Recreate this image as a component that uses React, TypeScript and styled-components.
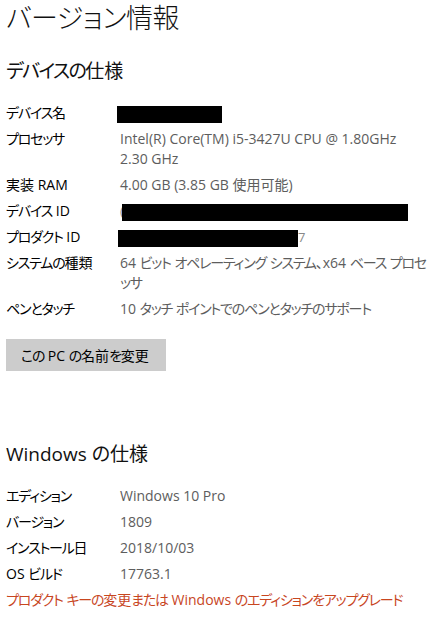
import React from 'react';
import styled, { createGlobalStyle } from 'styled-components';

const GlobalStyle = createGlobalStyle`
  html, body {
    margin: 0;
    padding: 0;
    background: #fff;
  }
  body {
    font-family: 'Open Sans', 'Noto Sans CJK JP', sans-serif;
    font-feature-settings: 'palt';
    color: #000;
  }
`;

const Page = styled.div({
  width: '439px',
  minHeight: '617px',
  padding: '0 0 0 6px',
  boxSizing: 'border-box',
  display: 'flex',
  flexDirection: 'column',
  alignItems: 'flex-start',
});

const Title = styled.h1({
  margin: 0,
  fontSize: '27px',
  lineHeight: '36px',
  fontWeight: 300,
  letterSpacing: '-0.4px',
  color: '#111',
});

const SectionTitle = styled.h2<{ $top?: number }>((p) => ({
  margin: `${p.$top ?? 21}px 0 0 0`,
  fontSize: '19px',
  lineHeight: '28px',
  fontWeight: 400,
  color: '#111',
}));

const SpecList = styled.div({
  marginTop: '18px',
  display: 'grid',
  gridTemplateColumns: '114px 314px',
  rowGap: '6px',
  fontSize: '14px',
  lineHeight: '20px',
});

const Label = styled.div({
  color: '#000',
  whiteSpace: 'nowrap',
});

const Value = styled.div({
  color: '#5d5d5d',
});

// kana runs are a bit tighter in the original UI font
const Kana = styled.span({
  letterSpacing: '-0.085em',
});

const Redacted = styled.span<{ $width: number; $shift?: number }>((p) => ({
  display: 'inline-block',
  verticalAlign: 'middle',
  width: `${p.$width}px`,
  height: '17px',
  marginLeft: `${p.$shift ?? -3}px`,
  background: '#000',
}));

const Peek = styled.span({
  color: '#888',
  fontSize: '13px',
});

const Button = styled.button({
  marginTop: '20px',
  height: '32px',
  width: '160px',
  padding: '0 0 0 15px',
  border: 'none',
  background: '#cccccc',
  color: '#000',
  fontFamily: "'Open Sans', 'Noto Sans CJK JP', sans-serif",
  fontFeatureSettings: "'palt'",
  fontSize: '14px',
  textAlign: 'left',
  whiteSpace: 'nowrap',
  cursor: 'pointer',
});

const Link = styled.a({
  marginTop: '6px',
  fontSize: '14px',
  lineHeight: '20px',
  color: '#c8461f',
  textDecoration: 'none',
  whiteSpace: 'nowrap',
});

const tight = (text: string) =>
  text
    .split(/([\u3040-\u30ff]+)/)
    .map((part, i) =>
      /[\u3040-\u30ff]/.test(part) ? <Kana key={i}>{part}</Kana> : part
    );

interface SpecRow {
  label: string;
  value?: React.ReactNode;
}

const deviceRows: SpecRow[] = [
  { label: 'デバイス名', value: <Redacted $width={105} /> },
  {
    label: 'プロセッサ',
    value: (
      <>
        Intel(R) Core(TM) i5-3427U CPU @ 1.80GHz
        <br />
        2.30 GHz
      </>
    ),
  },
  { label: '実装 RAM', value: '4.00 GB (3.85 GB 使用可能)' },
  {
    label: 'デバイス ID',
    value: (
      <>
        <Peek>(</Peek>
        <Redacted $width={286} $shift={-2} />
      </>
    ),
  },
  {
    label: 'プロダクト ID',
    value: (
      <>
        <Redacted $width={180} $shift={-2} />
        <Peek>7</Peek>
      </>
    ),
  },
  {
    label: 'システムの種類',
    value: tight('64 ビット オペレーティング システム、x64 ベース プロセッサ'),
  },
  {
    label: 'ペンとタッチ',
    value: tight('10 タッチ ポイントでのペンとタッチのサポート'),
  },
];

const windowsRows: SpecRow[] = [
  { label: 'エディション', value: 'Windows 10 Pro' },
  { label: 'バージョン', value: '1809' },
  { label: 'インストール日', value: '2018/10/03' },
  { label: 'OS ビルド', value: '17763.1' },
];

const Specs: React.FC<{ rows: SpecRow[] }> = ({ rows }) => (
  <SpecList>
    {rows.map((row) => (
      <React.Fragment key={row.label}>
        <Label>{tight(row.label)}</Label>
        <Value>{row.value}</Value>
      </React.Fragment>
    ))}
  </SpecList>
);

export default function App() {
  return (
    <>
      <GlobalStyle />
      <Page>
        <Title>バージョン情報</Title>

        <SectionTitle>{tight('デバイスの仕様')}</SectionTitle>
        <Specs rows={deviceRows} />
        <Button>{tight('この PC の名前を変更')}</Button>

        <SectionTitle $top={69}>Windows の仕様</SectionTitle>
        <Specs rows={windowsRows} />
        <Link href="#">
          {tight('プロダクト キーの変更または Windows のエディションをアップグレード')}
        </Link>
      </Page>
    </>
  );
}
